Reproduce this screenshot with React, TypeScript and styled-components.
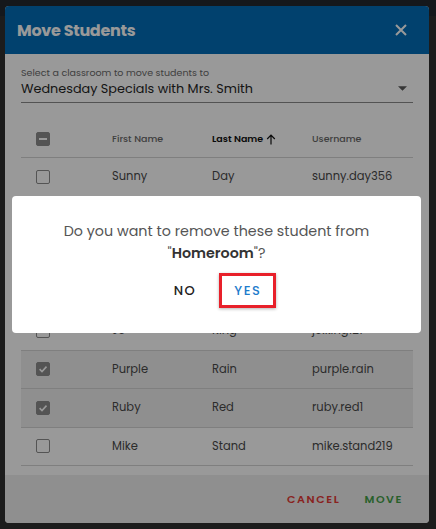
import styled, { createGlobalStyle } from 'styled-components';

const GlobalStyle = createGlobalStyle`
  html, body {
    margin: 0;
    padding: 0;
    background: #2f2f2f;
  }
  * { box-sizing: border-box; }
`;

const FONT = `'Poppins', 'Open Sans', 'DejaVu Sans', sans-serif`;

interface Student {
  first: string;
  last: string;
  username: string;
  checked?: boolean;
}

const students: Student[] = [
  { first: 'Sunny', last: 'Day', username: 'sunny.day356' },
  { first: 'Rose', last: 'Bud', username: 'rose.bud88' },
  { first: 'Lily', last: 'Field', username: 'lily.field12' },
  { first: 'Sam', last: 'Hill', username: 'sam.hill401' },
  { first: 'Jo', last: 'King', username: 'jo.king127' },
  { first: 'Purple', last: 'Rain', username: 'purple.rain', checked: true },
  { first: 'Ruby', last: 'Red', username: 'ruby.red1', checked: true },
  { first: 'Mike', last: 'Stand', username: 'mike.stand219' },
];

function CheckMark() {
  return (
    <svg width="10" height="10" viewBox="0 0 10 10">
      <path d="M1.6 5.2 L4 7.5 L8.5 2.6" stroke="#fff" strokeWidth="1.6" fill="none" />
    </svg>
  );
}

export default function App() {
  return (
    <Page>
      <GlobalStyle />
      <TopBand />
      <Modal>
        <Header>
          <Title>Move Students</Title>
          <CloseBtn>
            <svg width="12" height="12" viewBox="0 0 12 12">
              <path d="M1 1 L11 11 M11 1 L1 11" stroke="#fff" strokeWidth="2" />
            </svg>
          </CloseBtn>
        </Header>
        <Body>
          <SelectField>
            <SelectLabel>Select a classroom to move students to</SelectLabel>
            <SelectValue>
              <span>Wednesday Specials with Mrs. Smith</span>
              <svg width="9" height="5" viewBox="0 0 10 5">
                <path d="M0 0 L10 0 L5 5 Z" fill="#5a5a5a" />
              </svg>
            </SelectValue>
          </SelectField>
          <Table>
            <HeadRow>
              <CheckCell>
                <Box filled>
                  <Dash />
                </Box>
              </CheckCell>
              <HeadCell>First Name</HeadCell>
              <HeadCell active>
                Last Name
                <svg width="10" height="11" viewBox="0 0 10 11">
                  <path d="M5 10.5 V1.5 M1.2 5 L5 1.2 L8.8 5" stroke="#111" strokeWidth="1.2" fill="none" />
                </svg>
              </HeadCell>
              <HeadCell>Username</HeadCell>
            </HeadRow>
            {students.map((s) => (
              <Row key={s.username} selected={!!s.checked}>
                <CheckCell>
                  <Box filled={!!s.checked}>{s.checked && <CheckMark />}</Box>
                </CheckCell>
                <Cell>{s.first}</Cell>
                <Cell>{s.last}</Cell>
                <Cell>{s.username}</Cell>
              </Row>
            ))}
          </Table>
        </Body>
        <Footer>
          <FooterBtn color="#e53935">CANCEL</FooterBtn>
          <FooterBtn color="#43a047">MOVE</FooterBtn>
        </Footer>
      </Modal>
      <Overlay>
        <Confirm>
          <ConfirmText>
            Do you want to remove these student from
            <br />
            "<b>Homeroom</b>"?
          </ConfirmText>
          <ConfirmActions>
            <ConfirmBtn>NO</ConfirmBtn>
            <ConfirmBtn primary>YES</ConfirmBtn>
          </ConfirmActions>
        </Confirm>
      </Overlay>
    </Page>
  );
}

const Page = styled.div`
  position: relative;
  width: 436px;
  height: 529px;
  overflow: hidden;
  font-family: ${FONT};
  background: #2f2f2f;
  padding: 6px 7px 0 5px;
`;

const TopBand = styled.div`
  position: absolute;
  top: 0;
  left: 0;
  right: 0;
  height: 16px;
  background: #242830;
`;

const Modal = styled.div`
  position: relative;
  width: 424px;
  height: 517px;
  background: #fff;
  border-radius: 4px;
  overflow: hidden;
  display: flex;
  flex-direction: column;
`;

const Header = styled.div`
  height: 48px;
  background: #036db8;
  display: flex;
  align-items: center;
  justify-content: space-between;
  padding: 0 22px 0 12px;
`;

const Title = styled.h2`
  margin: 0;
  color: #fff;
  font-size: 16px;
  font-weight: 700;
  letter-spacing: -0.3px;
`;

const CloseBtn = styled.div`
  display: flex;
  align-items: center;
`;

const Body = styled.div`
  flex: 1;
  padding: 12px 16px 0 16px;
`;

const SelectField = styled.div`
  border-bottom: 1px solid #8a8a8a;
  padding-bottom: 4px;
`;

const SelectLabel = styled.div`
  font-size: 9.5px;
  color: #6b6b6b;
  line-height: 13px;
`;

const SelectValue = styled.div`
  display: flex;
  align-items: center;
  justify-content: space-between;
  font-size: 12.8px;
  color: #262626;
  line-height: 19px;
  padding-right: 6px;
`;

const Table = styled.div`
  margin-top: 18px;
`;

const HeadRow = styled.div`
  display: grid;
  grid-template-columns: 81px 100px 100px 1fr;
  height: 37px;
  align-items: center;
  border-bottom: 1px solid #d4d4d4;
`;

const Row = styled(HeadRow)<{ selected: boolean }>`
  height: 38.5px;
  background: ${(p) => (p.selected ? '#efefef' : 'transparent')};
`;

const CheckCell = styled.div`
  padding-left: 15px;
  display: flex;
  align-items: center;
`;

const Box = styled.div<{ filled?: boolean }>`
  width: 14px;
  height: 14px;
  border-radius: 2px;
  border: 1.5px solid #8c8c8c;
  background: ${(p) => (p.filled ? '#8c8c8c' : 'transparent')};
  display: flex;
  align-items: center;
  justify-content: center;
`;

const Dash = styled.div`
  width: 8px;
  height: 2px;
  background: #fff;
`;

const HeadCell = styled.div<{ active?: boolean }>`
  padding-left: 10px;
  font-size: 9.5px;
  font-weight: ${(p) => (p.active ? 600 : 500)};
  color: ${(p) => (p.active ? '#111' : '#6a6a6a')};
  display: flex;
  align-items: center;
  gap: 3px;
`;

const Cell = styled.div`
  padding-left: 10px;
  font-size: 11.5px;
  color: #4a4a4a;
`;

const Footer = styled.div`
  height: 48px;
  background: #eeeeee;
  display: flex;
  align-items: center;
  justify-content: flex-end;
  padding-right: 14px;
`;

const FooterBtn = styled.div<{ color: string }>`
  color: ${(p) => p.color};
  font-size: 11px;
  font-weight: 600;
  letter-spacing: 1.6px;
  padding: 6px 12px;
`;

const Overlay = styled.div`
  position: absolute;
  inset: 0;
  background: rgba(0, 0, 0, 0.4);
  padding: 196px 15px 0 12px;
`;

const Confirm = styled.div`
  background: #fff;
  border-radius: 4px;
  height: 137px;
  display: flex;
  flex-direction: column;
  align-items: center;
  padding-top: 24px;
`;

const ConfirmText = styled.div`
  font-size: 14.3px;
  line-height: 22px;
  color: #555;
  text-align: center;

  & b {
    color: #333;
    font-weight: 600;
  }
`;

const ConfirmActions = styled.div`
  margin-top: 9px;
  display: flex;
  align-items: center;
  gap: 8px;
  padding-left: 2px;
`;

const ConfirmBtn = styled.div<{ primary?: boolean }>`
  font-size: 13px;
  font-weight: 500;
  letter-spacing: 1.5px;
  color: ${(p) => (p.primary ? '#1e7ccc' : '#222')};
  height: 35px;
  display: flex;
  align-items: center;
  justify-content: center;
  padding: 0 12px;
  border: 3px solid ${(p) => (p.primary ? '#e8202a' : 'transparent')};
  box-shadow: ${(p) => (p.primary ? '0 1px 3px rgba(0,0,0,0.3)' : 'none')};
`;
